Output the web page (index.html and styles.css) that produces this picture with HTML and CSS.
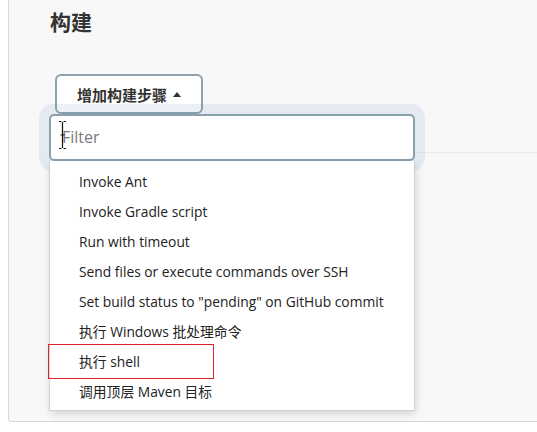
FILE: index.html
```html
<!DOCTYPE html>
<html lang="zh">
<head>
<meta charset="utf-8">
<link rel="stylesheet" href="styles.css">
</head>
<body>
<div class="panel">
  <h2 class="title">构建</h2>
  <div class="step">
    <button class="add">增加构建步骤<span class="caret"></span></button>
    <div class="dropdown">
      <div class="filter-wrap">
        <div class="filter">Filter</div>
        <svg class="ibeam" width="9" height="30" viewBox="0 0 9 30">
          <path d="M1 1.5h2.5M5.5 1.5H8M4.5 2v26M1 28.5h2.5M5.5 28.5H8M2.5 15h4" stroke="#111" stroke-width="1.2" fill="none"/>
        </svg>
      </div>
      <ul class="menu">
        <li>Invoke Ant</li>
        <li>Invoke Gradle script</li>
        <li>Run with timeout</li>
        <li>Send files or execute commands over SSH</li>
        <li>Set build status to "pending" on GitHub commit</li>
        <li>执行 Windows 批处理命令</li>
        <li>执行 shell</li>
        <li>调用顶层 Maven 目标</li>
        <div class="highlight"></div>
      </ul>
    </div>
  </div>
  <div class="divider"></div>
</div>
</body>
</html>
```

FILE: styles.css
```css
html, body {
  margin: 0;
  padding: 0;
  background: #ffffff;
}

body {
  font-family: "Open Sans", "Noto Sans CJK SC", sans-serif;
  color: #333333;
  overflow: hidden;
}

.panel {
  margin-left: 8px;
  background: #f8f8f8;
  border-left: 1px solid #d3d8dc;
  border-bottom: 1px solid #d3d8dc;
  border-bottom-left-radius: 4px;
  padding: 9px 0 0 41px;
  box-sizing: border-box;
  height: 422px;
}

.title {
  margin: 0;
  font-family: "Noto Sans CJK SC", sans-serif;
  font-size: 21px;
  line-height: 25px;
  font-weight: 700;
  color: #333333;
}

.step {
  position: relative;
  margin-top: 40px;
  height: 40px;
}

.add {
  margin: 0 0 0 5px;
  height: 40px;
  box-sizing: border-box;
  padding: 0 20px 0 20px;
  background: #ffffff;
  border: 2px solid #8fa2ad;
  border-radius: 6px;
  font-family: "Noto Sans CJK SC", sans-serif;
  font-size: 15px;
  font-weight: 700;
  color: #333333;
  display: flex;
  align-items: center;
  gap: 6px;
}

.caret {
  width: 0;
  height: 0;
  border-left: 4.5px solid transparent;
  border-right: 4.5px solid transparent;
  border-bottom: 5px solid #333333;
}

.dropdown {
  position: absolute;
  top: 40px;
  left: -1px;
  width: 366px;
  z-index: 2;
}

.filter-wrap {
  position: relative;
}

.filter {
  height: 47px;
  box-sizing: border-box;
  border: 2px solid #8aa0ac;
  border-radius: 5px;
  background: #ffffff;
  box-shadow: 0 0 0 10px rgba(60, 120, 180, 0.1);
  padding-left: 11px;
  font-size: 16px;
  line-height: 43px;
  color: #7a7a7a;
}

.ibeam {
  position: absolute;
  left: 9px;
  top: 6px;
}

.menu {
  position: relative;
  list-style: none;
  margin: 0;
  padding: 6px 0 3px 0;
  background: #ffffff;
  border: 1px solid #cbd3d8;
  border-top: none;
  box-shadow: 1px 3px 8px rgba(0, 0, 0, 0.14);
}

.menu li {
  height: 30px;
  line-height: 30px;
  padding-left: 29px;
  font-size: 13.8px;
  color: #222222;
  white-space: nowrap;
}

.highlight {
  position: absolute;
  left: -2px;
  top: 183px;
  width: 166px;
  height: 35px;
  box-sizing: border-box;
  border: 1px solid #e2222c;
}

.divider {
  margin-top: 38px;
  border-top: 1px solid #ebebeb;
}
```
